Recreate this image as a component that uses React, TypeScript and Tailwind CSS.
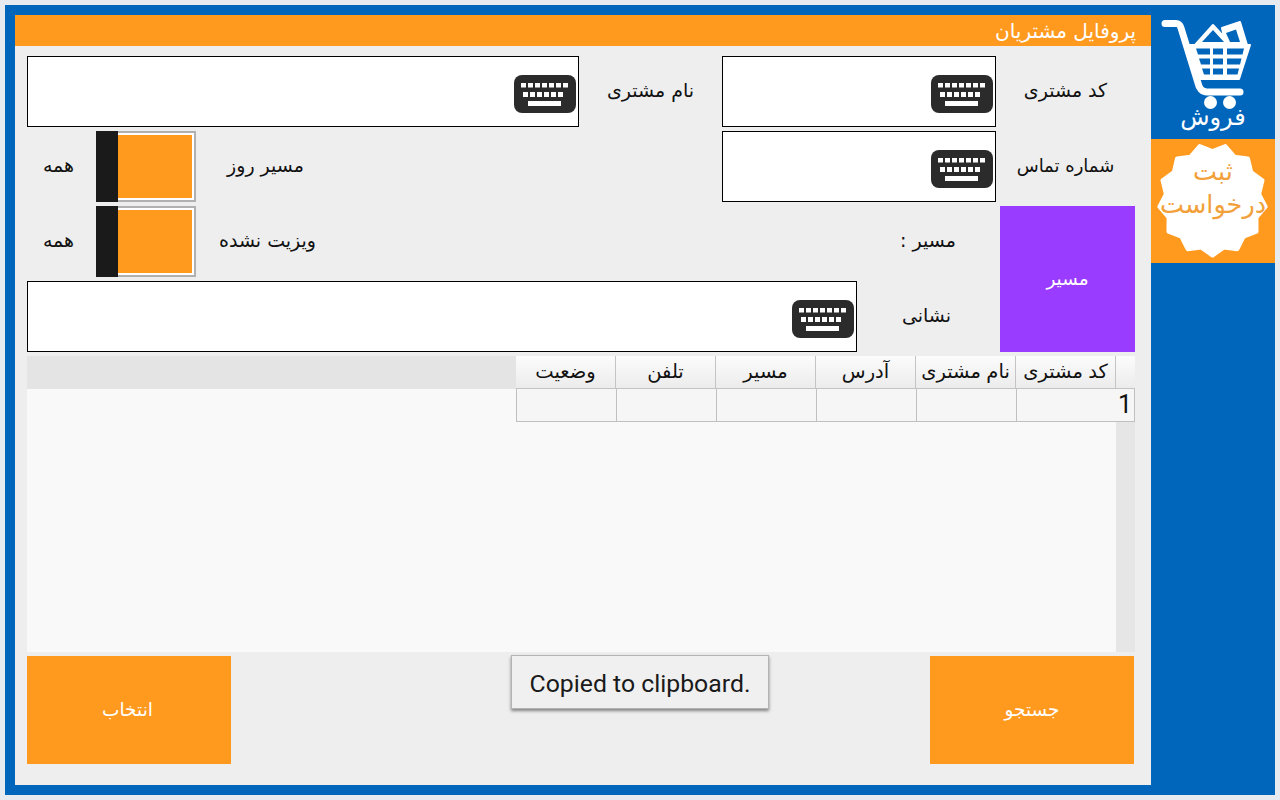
import React from 'react';

const persianFont = "font-['DejaVu_Sans',sans-serif]";

// keyboard button shown inside the text inputs
const KeyboardIcon = () => (
  <svg width="62" height="38" viewBox="0 0 62 38">
    <rect x="0" y="0" width="62" height="38" rx="8" fill="#2b2b2b" />
    {[0, 1, 2, 3, 4, 5, 6].map((i) => (
      <rect key={i} x={7 + i * 7} y="8" width="5" height="4.5" fill="#fff" />
    ))}
    {[0, 1, 2, 3, 4, 5].map((i) => (
      <rect key={i} x={9 + i * 7} y="17" width="5" height="5" fill="#fff" />
    ))}
    <rect x="14" y="26" width="33" height="5" fill="#fff" />
  </svg>
);

const TextBox = ({ className }: { className: string }) => (
  <div className={`h-[71px] bg-white border border-black flex items-center justify-end pr-[2px] pt-[4px] ${className}`}>
    <KeyboardIcon />
  </div>
);

const Toggle = () => (
  <div className="w-[100px] h-[71px] flex shrink-0">
    <div className="w-[22px] bg-[#1a1a1a]" />
    <div className="flex-1 bg-white border-2 border-[#b0b0b0] border-l-0 p-[2px] pl-0">
      <div className="w-full h-full bg-[#ff9a1f]" />
    </div>
  </div>
);

const Label = ({ text, className }: { text: string; className: string }) => (
  <div dir="rtl" className={`flex items-center justify-center pb-[2px] text-[#111] ${className}`}>
    {text}
  </div>
);

const headers = ['کد مشتری', 'نام مشتری', 'آدرس', 'مسیر', 'تلفن', 'وضعیت'];

// star shaped badge behind the request button text
const badgePath = () => {
  const points = 13;
  const cx = 61.5;
  const cy = 61;
  let d = '';
  for (let i = 0; i < points; i++) {
    const a1 = (i / points) * Math.PI * 2 - Math.PI / 2;
    const a2 = ((i + 0.5) / points) * Math.PI * 2 - Math.PI / 2;
    d += `${i === 0 ? 'M' : 'L'}${cx + 47 * Math.cos(a1)} ${cy + 49 * Math.sin(a1)}`;
    d += ` L${cx + 53.5 * Math.cos(a2)} ${cy + 55.5 * Math.sin(a2)} `;
  }
  return d + 'Z';
};

const cartHoles = [
  'M41 33.5H55V39.5H43Z',
  'M58 33.5H68V39.5H58Z',
  'M72 33.5H89L87.5 39.5H72Z',
  'M44 43.5H55V49.5H46Z',
  'M58 43.5H68V49.5H58Z',
  'M72 43.5H86.5L85 49.5H72Z',
  'M47 53.5H55V59.5H49Z',
  'M58 53.5H68V59.5H58Z',
  'M72 53.5H84L82.5 59.5H72Z',
];

const CartIcon = () => (
  <svg width="100" height="90" viewBox="0 0 100 90" className="block">
    <path
      d="M10 8.5 H21 C24 8.5 25 10 26 13 L43 68 C44 73 47 77 52 77 H85"
      fill="none"
      stroke="#fff"
      strokeWidth="7"
      strokeLinecap="round"
      strokeLinejoin="round"
    />
    <path d="M58 10 L69 22 L67 13 L85 7 L92 30 L95 30 L84 64 L44 64 L35 30 L40 30 Z" fill="#fff" strokeLinejoin="round" stroke="#fff" strokeWidth="2" />
    <path d="M47 27 L58 15 L69 27 Z" fill="#0066bb" />
    <path d="M71 18 L81 14.5 L85 27 L75 27 Z" fill="#0066bb" />
    {cartHoles.map((d) => (
      <path key={d} d={d} fill="#0066bb" />
    ))}
  </svg>
);

const App = () => {
  return (
    <div className={`w-[1280px] h-[800px] bg-[#e6ebef] p-[5px] ${persianFont}`}>
      <div className="w-full h-full bg-[#0066bb] pl-[10px] pt-[10px] pb-[10px] flex">
        <main className="w-[1136px] bg-[#eeeeee] flex flex-col relative">
          <header dir="rtl" className="h-[31px] bg-[#ff9a1f] text-white text-[20px] flex items-center pr-[15px]">
            پروفایل مشتریان
          </header>
          <div className="pl-[12px] pr-[16px] pt-[10px] flex flex-col gap-[4px] text-[19px]">
            <div className="flex">
              <TextBox className="w-[552px]" />
              <Label text="نام مشتری" className="w-[143px]" />
              <TextBox className="w-[274px]" />
              <Label text="کد مشتری" className="w-[139px]" />
            </div>
            <div className="flex h-[71px]">
              <Label text="همه" className="w-[69px] pr-[6px]" />
              <Toggle />
              <Label text="مسیر روز" className="w-[139px]" />
              <div className="w-[387px]" />
              <TextBox className="w-[274px]" />
              <Label text="شماره تماس" className="w-[139px] text-[18px]" />
            </div>
            <div className="flex gap-[4px]">
              <div className="w-[969px] flex flex-col gap-[4px]">
                <div className="flex h-[71px]">
                  <Label text="همه" className="w-[69px] pr-[6px]" />
                  <Toggle />
                  <Label text="ویزیت نشده" className="w-[143px]" />
                  <div className="flex-1" />
                  <Label text="مسیر :" className="w-[136px]" />
                </div>
                <div className="flex">
                  <TextBox className="w-[830px]" />
                  <Label text="نشانی" className="w-[139px]" />
                </div>
              </div>
              <div dir="rtl" className="w-[135px] h-[146px] bg-[#9a3cff] text-white text-[18.5px] flex items-center justify-center">
                مسیر
              </div>
            </div>
            <section className="h-[296px] bg-[#f9f9f9] flex flex-col">
              <div className="flex h-[33px] shrink-0">
                <div className="flex-1 bg-[#e4e4e4]" />
                {[...headers].reverse().map((h) => (
                  <div
                    key={h}
                    dir="rtl"
                    className="w-[100px] bg-gradient-to-b from-[#fcfcfc] to-[#ececec] border-r border-b border-[#c4c4c4] flex items-center justify-center text-[19.5px] font-['Liberation_Sans','DejaVu_Sans',sans-serif] text-[#111]"
                  >
                    {h}
                  </div>
                ))}
                <div className="w-[19px] bg-gradient-to-b from-[#fcfcfc] to-[#ececec] border-b border-[#c4c4c4]" />
              </div>
              <div className="flex h-[33px] shrink-0">
                <div className="flex-1" />
                <div className="w-[619px] flex border-b border-l border-r border-[#c0c0c0] bg-[#f6f6f6]">
                  {[0, 1, 2, 3, 4].map((i) => (
                    <div key={i} className="w-[100px] border-r border-[#c0c0c0]" />
                  ))}
                  <div className="flex-1 flex items-center justify-end pr-[2px] text-[25px] font-['Roboto',sans-serif] text-[#111]">
                    1
                  </div>
                </div>
              </div>
              <div className="flex-1 flex justify-end">
                <div className="w-[19px] bg-[#e6e6e6]" />
              </div>
            </section>
            <div className="flex justify-between pr-[1px]">
              <div dir="rtl" className="w-[204px] h-[108px] bg-[#ff9a1f] text-white text-[18.5px] flex items-center justify-center pr-[3px]">
                انتخاب
              </div>
              <div dir="rtl" className="w-[204px] h-[108px] bg-[#ff9a1f] text-white text-[18.5px] flex items-center justify-center">
                جستجو
              </div>
            </div>
          </div>
          {/* toast */}
          <div className="absolute left-[496px] top-[640px] w-[258px] h-[54px] bg-[#f0f0f0] border border-[#b4b4b4] shadow-[0_2px_3px_rgba(0,0,0,0.45)] flex items-center justify-center pt-[3px] font-['Roboto',sans-serif] text-[24.8px] text-[#1a1a1a]">
            Copied to clipboard.
          </div>
        </main>
        <aside className="flex-1 flex flex-col -mt-[10px]">
          <div className="h-[134px] pt-[10px] pl-[4px] flex flex-col relative">
            <CartIcon />
            <span className="absolute left-[53px] top-[91px] w-[13px] h-[13px] rounded-full bg-white" />
            <span className="absolute left-[72px] top-[91px] w-[13px] h-[13px] rounded-full bg-white" />
            <div dir="rtl" className="absolute left-0 right-0 top-[96px] text-center text-white text-[24px] leading-[30px] font-['Noto_Sans','DejaVu_Sans',sans-serif]">
              فروش
            </div>
          </div>
          <div className="h-[124px] bg-[#ff9a1f] relative flex items-center justify-center">
            <svg width="124" height="124" viewBox="0 0 124 124" className="block">
              <path d={badgePath()} fill="#fff" stroke="#fff" strokeWidth="4" strokeLinejoin="round" />
            </svg>
            <div dir="rtl" className="absolute inset-0 flex flex-col items-center justify-center pb-[26px] text-[#f2a03a] text-[25.5px] leading-[33px]">
              <span>ثبت</span>
              <span>درخواست</span>
            </div>
          </div>
        </aside>
      </div>
    </div>
  );
};

export default App;
